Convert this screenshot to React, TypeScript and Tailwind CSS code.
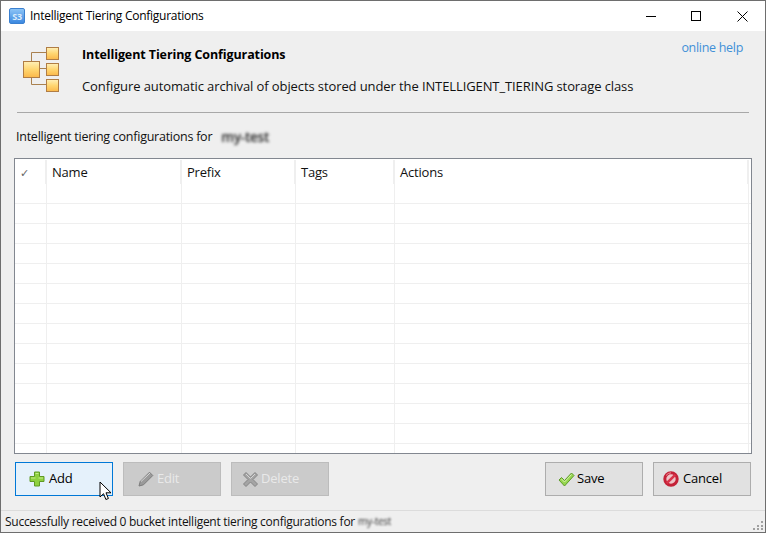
import React from "react";

function OrgIcon() {
  const Box = ({ x, y, s }: { x: number; y: number; s: number }) => (
    <rect x={x + 0.5} y={y + 0.5} width={s} height={s} fill="url(#og)" stroke="#b07d45" />
  );
  return (
    <svg width="38" height="46" viewBox="0 0 38 46" className="shrink-0">
      <defs>
        <linearGradient id="og" x1="0" y1="0" x2="0" y2="1">
          <stop offset="0" stopColor="#fff0b8" />
          <stop offset="0.5" stopColor="#ffd671" />
          <stop offset="1" stopColor="#fbb84a" />
        </linearGradient>
      </defs>
      <path d="M8.5 15V5.5H24M16 21.5H24M8.5 28V37.5H24" fill="none" stroke="#a9814f" strokeWidth="1" />
      <Box x={0} y={14} s={16} />
      <Box x={23} y={0} s={12} />
      <Box x={23} y={16} s={12} />
      <Box x={23} y={32} s={12} />
    </svg>
  );
}

function Plus() {
  return (
    <svg width="16" height="16" viewBox="0 0 16 16">
      <path d="M5.5 1h5v4.5H15v5h-4.5V15h-5v-4.5H1v-5h4.5z" fill="#8fd13f" stroke="#5f9a24" strokeLinejoin="round" />
      <path d="M6.5 2h3v4.5H14v1H9.5V3h-3zM2 6.5h4.5v1H2z" fill="#c6ec8c" />
    </svg>
  );
}
function Pencil() {
  return (
    <svg width="16" height="16" viewBox="0 0 16 16">
      <path d="M1 15l1.2-4.5L11.5 1.2l3.3 3.3L5.5 13.8z" fill="#9a9a9a" stroke="#7c7c7c" strokeLinejoin="round" />
      <path d="M3 10.5L12 2" stroke="#d8d8d8" />
    </svg>
  );
}
function Cross() {
  return (
    <svg width="17" height="17" viewBox="0 0 17 17">
      <path d="M4 1.5l4.5 4.5L13 1.5 15.5 4 11 8.5l4.5 4.5-2.5 2.5L8.5 11 4 15.5 1.5 13 6 8.5 1.5 4z" fill="#a4a4a4" stroke="#858585" strokeLinejoin="round" />
      <path d="M4 3l4.5 4.5L13 3" fill="none" stroke="#d6d6d6" />
    </svg>
  );
}
function Check() {
  return (
    <svg width="17" height="15" viewBox="0 0 17 15">
      <path d="M1 8l2.5-2.5 3 3 7-7.5L16 3.5 6.5 14z" fill="#96d64e" stroke="#5d9b29" strokeLinejoin="round" />
      <path d="M3.5 7l3 3 7-7.5" fill="none" stroke="#d5f2ab" />
    </svg>
  );
}
function NoSign() {
  return (
    <svg width="16" height="16" viewBox="0 0 16 16">
      <circle cx="8" cy="8" r="6.2" fill="#eec4c8" stroke="#c42238" strokeWidth="3" />
      <path d="M3.8 12.2l8.4-8.4" stroke="#d8344a" strokeWidth="2.6" />
      <path d="M3 4.5A6.5 6.5 0 0 1 8 1.8" fill="none" stroke="#ee8a96" strokeWidth="1" />
    </svg>
  );
}
function Cursor() {
  return (
    <svg width="13" height="20" viewBox="0 0 13 20" className="absolute left-[83px] top-[18px]">
      <path d="M1 1v15l3.5-3.3 2.4 5.8 2.5-1-2.4-5.7H12z" fill="#fff" stroke="#000" strokeLinejoin="round" />
    </svg>
  );
}

const cols = ["w-[32px]", "w-[135px]", "w-[114px]", "w-[99px]", "w-[354px]"];
const labels = ["", "Name", "Prefix", "Tags", "Actions"];

function Btn({
  icon,
  label,
  kind,
  layout,
  children,
}: {
  icon: React.ReactNode;
  label: string;
  kind: "hover" | "off" | "on";
  layout: string;
  children?: React.ReactNode;
}) {
  const cls =
    kind === "hover"
      ? "bg-[#e5f1fb] border-[#0078d7] text-black"
      : kind === "off"
      ? "bg-[#cbcbcb] border-[#bcbcbc] text-[#e9e9e9]"
      : "bg-[#e1e1e1] border-[#adadad] text-black";
  return (
    <div className={`relative w-[98px] h-[34px] border flex items-center text-[13px] ${layout} ${cls}`}>
      {icon}
      <span>{label}</span>
      {children}
    </div>
  );
}

export default function App() {
  return (
    <div className="w-[766px] h-[533px] flex flex-col bg-[#efefef] border border-[#6e6e6e] text-[12.5px] text-[#111] font-['Open_Sans','Noto_Sans',sans-serif] overflow-hidden tracking-[-0.2px]">
      <div className="h-[30px] bg-white flex items-center shrink-0">
        <div className="ml-[8px] w-[16px] h-[16px] rounded-[2px] bg-gradient-to-b from-[#8cc4f6] to-[#3b88e0] border border-[#3b80d0] text-[#dcecfb] text-[9px] font-bold flex items-center justify-center leading-none">
          S3
        </div>
        <span className="ml-[5px] text-[12px] text-black tracking-[-0.26px]">Intelligent Tiering Configurations</span>
        <div className="ml-auto flex">
          <div className="w-[45px] h-[30px] flex items-center justify-center">
            <svg width="10" height="10" viewBox="0 0 10 10"><path d="M0 5.5h10" stroke="#000" /></svg>
          </div>
          <div className="w-[46px] h-[30px] flex items-center justify-center">
            <svg width="10" height="10" viewBox="0 0 10 10"><rect x=".5" y=".5" width="9" height="9" fill="none" stroke="#000" /></svg>
          </div>
          <div className="w-[46px] h-[30px] flex items-center justify-center">
            <svg width="11" height="11" viewBox="0 0 11 11"><path d="M.5.5l10 10M10.5.5l-10 10" stroke="#000" /></svg>
          </div>
        </div>
      </div>

      <div className="flex-1 flex flex-col min-h-0 px-[13px]">
        <div className="relative h-[82px] shrink-0 mx-[3px] border-b border-[#a8a8a8] flex pt-[16px]">
          <div className="ml-[6px]"><OrgIcon /></div>
          <div className="ml-[21px]">
            <div className="font-bold text-black leading-[17px] mt-[-1px] tracking-[-0.1px]">Intelligent Tiering Configurations</div>
            <div className="mt-[15px] leading-[17px] text-[13px] tracking-[-0.1px]">Configure automatic archival of objects stored under the INTELLIGENT_TIERING storage class</div>
          </div>
          <span className="absolute right-[6px] top-[8px] text-[#3f8fd8] tracking-[-0.3px]">online help</span>
        </div>

        <div className="h-[45px] shrink-0 flex items-center pl-[2px] pt-[3px] tracking-[-0.25px]">
          <span>Intelligent tiering configurations for</span>
          <span className="ml-[9px] blur-[1.4px] text-[#222] text-[13.5px] font-semibold">my-test</span>
        </div>

        <div className="h-[296px] shrink-0 bg-white border border-[#828790] overflow-hidden">
          <div className="flex h-[25px] text-[13px] pt-[1px]">
            {labels.map((l, i) => (
              <div key={i} className={`${cols[i]} shrink-0 h-[24px] border-r-2 border-[#efefef] flex items-center pl-[5px] pt-[2px]`}>
                {i === 0 ? <span className="text-[#666] text-[11px]">✓</span> : l}
              </div>
            ))}
          </div>
          {Array.from({ length: 14 }).map((_, r) => (
            <div key={r} className="flex h-[20px] border-b border-[#efefef]">
              {cols.map((c, i) => (
                <div key={i} className={`${c} shrink-0 border-r border-[#efefef]`} />
              ))}
            </div>
          ))}
        </div>

        <div className="flex items-start h-[56px] shrink-0 pt-[8px]">
          <div className="flex gap-[10px] ml-[1px]">
            <Btn icon={<Plus />} label="Add" kind="hover" layout="pl-[13px] gap-[4px]"><Cursor /></Btn>
            <Btn icon={<Pencil />} label="Edit" kind="off" layout="pl-[14px] gap-[3px]" />
            <Btn icon={<Cross />} label="Delete" kind="off" layout="pl-[10px] gap-[2px]" />
          </div>
          <div className="ml-auto flex gap-[10px] mr-[1px]">
            <Btn icon={<Check />} label="Save" kind="on" layout="pl-[12px] gap-[2px]" />
            <Btn icon={<NoSign />} label="Cancel" kind="on" layout="pl-[9px] gap-[4px]" />
          </div>
        </div>
      </div>

      <div className="relative h-[22px] shrink-0 border-t border-[#dcdcdc] flex items-center pl-[4px] text-[12px] tracking-[-0.27px]">
        <span>Successfully received 0 bucket intelligent tiering configurations for</span>
        <span className="ml-[3px] blur-[1.2px] text-[#333] text-[10px]">my-test</span>
        <svg width="10" height="10" viewBox="0 0 10 10" className="absolute right-[2px] bottom-[2px]">
          <path d="M8 1h2v2H8zM4 5h2v2H4zM8 5h2v2H8zM0 8h2v2H0zM4 8h2v2H4zM8 8h2v2H8z" fill="#a0a0a0" />
        </svg>
      </div>
    </div>
  );
}
